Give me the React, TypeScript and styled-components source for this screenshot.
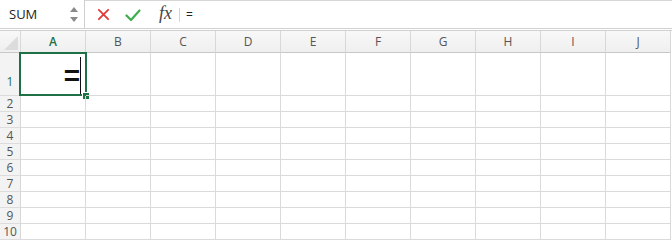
import React from "react";
import styled, { createGlobalStyle } from "styled-components";

const columns = ["A", "B", "C", "D", "E", "F", "G", "H", "I", "J"];
const rows = [1, 2, 3, 4, 5, 6, 7, 8, 9, 10];

const GlobalStyle = createGlobalStyle`
  html, body {
    margin: 0;
    padding: 0;
    background: #ffffff;
  }
  body {
    font-family: "Open Sans", "Liberation Sans", sans-serif;
    color: #333333;
  }
`;

export default function App() {
  return (
    <>
      <GlobalStyle />
      <Page>
        <FormulaBar>
          <NameBox>
            <NameText>SUM</NameText>
            <Spinner>
              <ArrowUp />
              <ArrowDown />
            </Spinner>
          </NameBox>
          <FormulaArea>
            <IconButton $width={14}>
              <svg width="13" height="13" viewBox="0 0 14 14">
                <path d="M2 2 L12 12 M12 2 L2 12" stroke="#e23d3d" strokeWidth="2" strokeLinecap="round" />
              </svg>
            </IconButton>
            <IconButton $width={16}>
              <svg width="16" height="14" viewBox="0 0 16 14">
                <path d="M1.5 7.5 L6 12 L14.5 2.5" stroke="#3fad4e" strokeWidth="2.2" fill="none" strokeLinecap="round" strokeLinejoin="round" />
              </svg>
            </IconButton>
            <FxLabel>fx</FxLabel>
            <Divider />
            <FormulaText>=</FormulaText>
          </FormulaArea>
        </FormulaBar>

        <Grid>
          <Corner>
            <CornerTriangle />
          </Corner>
          {columns.map((c) => (
            <ColHeader key={c} $active={c === "A"}>
              {c}
            </ColHeader>
          ))}
          {rows.map((r) => (
            <React.Fragment key={r}>
              <RowHeader $active={r === 1} $tall={r === 1}>
                {r}
              </RowHeader>
              {columns.map((c) =>
                r === 1 && c === "A" ? (
                  <Cell key={c}>
                    <EditValue>=</EditValue>
                    <Caret />
                    <Selection />
                    <FillHandle />
                  </Cell>
                ) : (
                  <Cell key={c} />
                )
              )}
            </React.Fragment>
          ))}
        </Grid>
      </Page>
    </>
  );
}

const Page = styled.div`
  width: 672px;
  height: 240px;
  overflow: hidden;
  background: #ffffff;
`;

const FormulaBar = styled.div`
  display: flex;
  height: 29px;
  box-sizing: border-box;
  border-bottom: 1px solid #d0d0d0;
  margin-bottom: 1px;
`;

const NameBox = styled.div`
  width: 85px;
  display: flex;
  align-items: center;
  justify-content: space-between;
  padding: 0 6px 0 9px;
  box-sizing: border-box;
  border-right: 1px solid #cfcfcf;
`;

const NameText = styled.span`
  font-size: 13px;
  color: #222222;
`;

const Spinner = styled.div`
  display: flex;
  flex-direction: column;
  gap: 5px;
  padding-top: 1px;
`;

const ArrowUp = styled.span`
  width: 0;
  height: 0;
  border-left: 4px solid transparent;
  border-right: 4px solid transparent;
  border-bottom: 5px solid #8a8a8a;
`;

const ArrowDown = styled.span`
  width: 0;
  height: 0;
  border-left: 4px solid transparent;
  border-right: 4px solid transparent;
  border-top: 5px solid #8a8a8a;
`;

const FormulaArea = styled.div`
  flex: 1;
  display: flex;
  align-items: center;
  gap: 15px;
  border-top: 1px solid #d6d6d6;
  padding-left: 11px;
`;

const IconButton = styled.span<{ $width: number }>`
  width: ${(p) => p.$width}px;
  display: flex;
  align-items: center;
  justify-content: center;
`;

const FxLabel = styled.span`
  font-family: "Liberation Serif", serif;
  font-style: italic;
  font-size: 18px;
  color: #444444;
  margin-left: 3px;
  margin-bottom: 2px;
  margin-right: -8px;
`;

const Divider = styled.span`
  width: 1px;
  height: 14px;
  background: #d4d4d4;
  margin-right: -9px;
`;

const FormulaText = styled.span`
  font-size: 12px;
  color: #222222;
`;

const Grid = styled.div`
  display: grid;
  grid-template-columns: 21px repeat(10, 65px);
  grid-template-rows: 22px 43px repeat(9, 16px);
  border-top: 1px solid #d0d0d0;
`;

const HeaderBase = styled.div`
  background: linear-gradient(#f8f8f8, #efefef);
  box-sizing: border-box;
  border-right: 1px solid #d8d8d8;
  border-bottom: 1px solid #c8c8c8;
  display: flex;
  align-items: center;
  justify-content: center;
  font-size: 12px;
  color: #555555;
`;

const Corner = styled(HeaderBase)`
  position: relative;
`;

const CornerTriangle = styled.span`
  position: absolute;
  right: 2px;
  bottom: 2px;
  width: 0;
  height: 0;
  border-left: 14px solid transparent;
  border-bottom: 14px solid #dcdcdc;
`;

const ColHeader = styled(HeaderBase)<{ $active?: boolean }>`
  color: ${(p) => (p.$active ? "#1e7145" : "#555555")};
  font-weight: ${(p) => (p.$active ? 600 : 400)};
`;

const RowHeader = styled(HeaderBase)<{ $active?: boolean; $tall?: boolean }>`
  align-items: ${(p) => (p.$tall ? "flex-end" : "center")};
  padding-bottom: ${(p) => (p.$tall ? "5px" : "0")};
  background: #f3f3f3;
  border-bottom: 1px solid #dcdcdc;
  color: ${(p) => (p.$active ? "#1e7145" : "#555555")};
  font-size: 12px;
`;

const Cell = styled.div`
  box-sizing: border-box;
  border-right: 1px solid #dadada;
  border-bottom: 1px solid #dadada;
  position: relative;
  display: flex;
  align-items: center;
  justify-content: flex-end;
  padding-right: 4px;
`;

const EditValue = styled.span`
  font-family: "Liberation Sans", sans-serif;
  font-size: 28px;
  font-weight: 700;
  line-height: 1;
  color: #111111;
  margin-top: 4px;
`;

const Caret = styled.span`
  width: 1px;
  height: 38px;
  background: #111111;
  margin-top: 3px;
`;

const Selection = styled.span`
  position: absolute;
  left: -2px;
  top: -1px;
  right: -2px;
  bottom: -1px;
  border: 2px solid #1e7145;
  pointer-events: none;
`;

const FillHandle = styled.span`
  position: absolute;
  right: -5px;
  bottom: -5px;
  width: 6px;
  height: 6px;
  background: #1e7145;
  border: 1px solid #ffffff;
  box-sizing: content-box;
`;
